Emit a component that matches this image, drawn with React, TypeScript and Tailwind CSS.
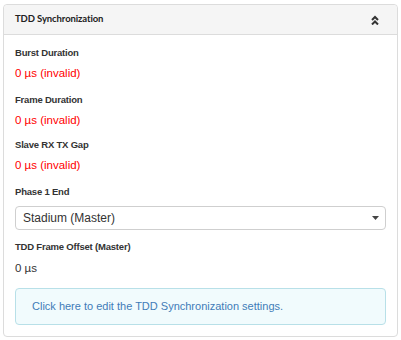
import React from 'react'

const fields = [
  { label: 'Burst Duration', value: '0 µs (invalid)' },
  { label: 'Frame Duration', value: '0 µs (invalid)' },
  { label: 'Slave RX TX Gap', value: '0 µs (invalid)' },
]

export default function App() {
  return (
    <div className="min-h-[340px] bg-white pt-[4px] px-[3px] font-['Liberation_Sans',Arial,sans-serif]">
      <div className="border border-[#dcdcdc] rounded-[4px] bg-white">
        {/* Header */}
        <div className="h-[30px] bg-[#f5f5f5] border-b border-[#dcdcdc] rounded-t-[4px] px-[11px] flex items-center justify-between">
          <span className="font-['Lato',sans-serif] text-[9.5px] font-bold text-[#222] tracking-[-0.1px]">TDD Synchronization</span>
          <svg width="8" height="10" viewBox="0 0 8 10" className="mr-[7px]">
            <polyline points="1,5 4,2 7,5" fill="none" stroke="#333" strokeWidth="2" />
            <polyline points="1,9.5 4,6.5 7,9.5" fill="none" stroke="#333" strokeWidth="2" />
          </svg>
        </div>

        {/* Body */}
        <div className="px-[11px] pt-[12px] pb-[11px] flex flex-col">
          {fields.map((f, i) => (
            <div key={f.label} className={i === 0 ? '' : i === 1 ? 'mt-[14px]' : 'mt-[12px]'}>
              <div className="text-[9.5px] leading-[12px] font-bold text-[#333] tracking-[-0.2px]">{f.label}</div>
              <div className="mt-[7px] text-[11.5px] leading-[14px] text-[#ff0000]">{f.value}</div>
            </div>
          ))}

          <div className="mt-[14px] text-[9.5px] leading-[12px] font-bold text-[#333] tracking-[-0.2px]">Phase 1 End</div>
          <div className="mt-[8px] h-[24px] border border-[#cfcfcf] rounded-[4px] flex items-center justify-between pl-[7px] pr-[6px]">
            <span className="text-[12px] text-[#333]">Stadium (Master)</span>
            <svg width="7" height="4" viewBox="0 0 7 4">
              <polygon points="0,0 7,0 3.5,4" fill="#444" />
            </svg>
          </div>

          <div className="mt-[11px] text-[9.5px] leading-[12px] font-bold text-[#333] tracking-[-0.2px]">TDD Frame Offset (Master)</div>
          <div className="mt-[8px] text-[11.5px] leading-[14px] text-[#333]">0 µs</div>

          <div className="mt-[13px] h-[37px] border border-[#b8e0e8] bg-[#f1fbfd] rounded-[4px] flex items-center pl-[16px]">
            <span className="text-[11px] text-[#3f7bb8] cursor-pointer">Click here to edit the TDD Synchronization settings.</span>
          </div>
        </div>
      </div>
    </div>
  )
}
